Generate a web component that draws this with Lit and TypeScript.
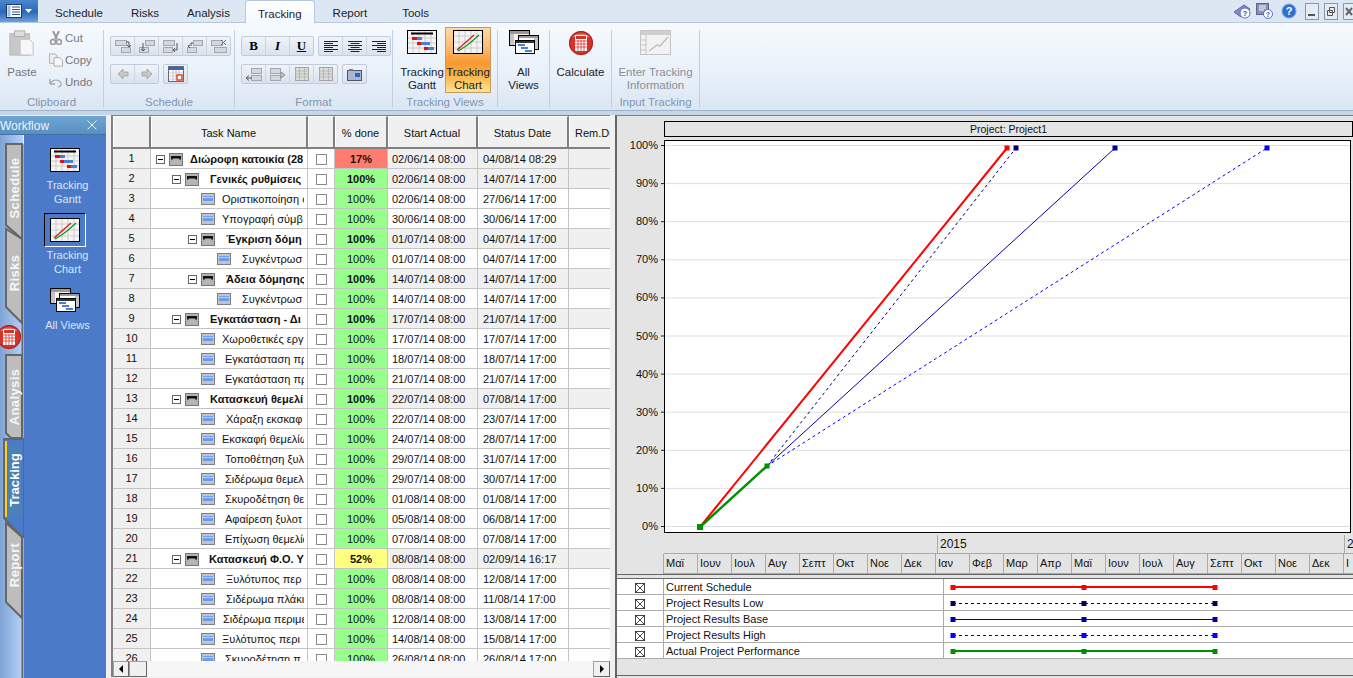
import { LitElement, html, css, svg } from 'lit';
import { customElement } from 'lit/decorators.js';

type Row = [level: number, summary: boolean, name: string, textX: number, pct: number, start: string, status: string];

const ROWS: Row[] = [
  [0, true, 'Διώροφη κατοικία (28', 190, 17, '02/06/14 08:00', '04/08/14 08:29'],
  [1, true, 'Γενικές ρυθμίσεις', 210, 100, '02/06/14 08:00', '14/07/14 17:00'],
  [2, false, 'Οριστικοποίηση σ', 222, 100, '02/06/14 08:00', '27/06/14 17:00'],
  [2, false, 'Υπογραφή σύμβ', 222, 100, '30/06/14 08:00', '30/06/14 17:00'],
  [2, true, 'Έγκριση δόμη', 226, 100, '01/07/14 08:00', '04/07/14 17:00'],
  [3, false, 'Συγκέντρωσ', 242, 100, '01/07/14 08:00', '04/07/14 17:00'],
  [2, true, 'Άδεια δόμησης', 226, 100, '14/07/14 08:00', '14/07/14 17:00'],
  [3, false, 'Συγκέντρωσ', 242, 100, '14/07/14 08:00', '14/07/14 17:00'],
  [1, true, 'Εγκατάσταση - Δι', 210, 100, '17/07/14 08:00', '21/07/14 17:00'],
  [2, false, 'Χωροθετικές εργ', 222, 100, '17/07/14 08:00', '17/07/14 17:00'],
  [2, false, 'Εγκατάσταση πρ', 225, 100, '18/07/14 08:00', '18/07/14 17:00'],
  [2, false, 'Εγκατάσταση πρ', 225, 100, '21/07/14 08:00', '21/07/14 17:00'],
  [1, true, 'Κατασκευή θεμελί', 210, 100, '22/07/14 08:00', '07/08/14 17:00'],
  [2, false, 'Χάραξη εκσκαφ', 226, 100, '22/07/14 08:00', '23/07/14 17:00'],
  [2, false, 'Εκσκαφή θεμελίω', 222, 100, '24/07/14 08:00', '28/07/14 17:00'],
  [2, false, 'Τοποθέτηση ξυλ', 225, 100, '29/07/14 08:00', '31/07/14 17:00'],
  [2, false, 'Σιδέρωμα θεμελί', 225, 100, '29/07/14 08:00', '30/07/14 17:00'],
  [2, false, 'Σκυροδέτηση θε', 225, 100, '01/08/14 08:00', '01/08/14 17:00'],
  [2, false, 'Αφαίρεση ξυλοτ', 225, 100, '05/08/14 08:00', '06/08/14 17:00'],
  [2, false, 'Επίχωση θεμελίω', 225, 100, '07/08/14 08:00', '07/08/14 17:00'],
  [1, true, 'Κατασκευή Φ.Ο. Υ', 209, 52, '08/08/14 08:00', '02/09/14 16:17'],
  [2, false, 'Ξυλότυπος περ', 226, 100, '08/08/14 08:00', '12/08/14 17:00'],
  [2, false, 'Σιδέρωμα πλάκι', 226, 100, '08/08/14 08:00', '11/08/14 17:00'],
  [2, false, 'Σιδέρωμα περιμε', 223, 100, '12/08/14 08:00', '13/08/14 17:00'],
  [2, false, 'Ξυλότυπος περι', 222, 100, '14/08/14 08:00', '15/08/14 17:00'],
  [2, false, 'Σκυροδέτηση π', 225, 100, '26/08/14 08:00', '26/08/14 17:00'],
];

const MONTHS = ['Μαϊ', 'Ιουν', 'Ιουλ', 'Αυγ', 'Σεπτ', 'Οκτ', 'Νοε', 'Δεκ', 'Ιαν', 'Φεβ', 'Μαρ', 'Απρ', 'Μαϊ', 'Ιουν', 'Ιουλ', 'Αυγ', 'Σεπτ', 'Οκτ', 'Νοε', 'Δεκ', 'Ι'];

const LEGEND = [
  { name: 'Current Schedule', color: '#ff0000', width: 2, dash: '' },
  { name: 'Project Results Low', color: '#000066', width: 1, dash: '3 3' },
  { name: 'Project Results Base', color: '#0000aa', width: 1, dash: '' },
  { name: 'Project Results High', color: '#0000ff', width: 1, dash: '3 3' },
  { name: 'Actual Project Performance', color: '#009000', width: 2, dash: '' },
];

const ganttGlyph = () => svg`
  <rect x="0.5" y="0.5" width="29" height="23" fill="#f4f4f4" stroke="#000"/>
  <path d="M6 1v22M12 1v22M18 1v22M24 1v22M1 8h28M1 13h28M1 18h28" stroke="#ccc"/>
  <path d="M4 3.5h22" stroke="#000" stroke-width="2"/>
  <rect x="5" y="7" width="5" height="3" fill="#e01010"/><rect x="10" y="7" width="5" height="3" fill="#4a7fd8"/>
  <rect x="10" y="12" width="4" height="3" fill="#e01010"/><rect x="14" y="12" width="9" height="3" fill="#4a7fd8"/>
  <rect x="17" y="17" width="4" height="3" fill="#e01010"/><rect x="21" y="17" width="6" height="3" fill="#4a7fd8"/>`;

const chartGlyph = () => svg`
  <rect x="0.5" y="0.5" width="29" height="23" fill="#f4f4f4" stroke="#000"/>
  <path d="M6 1v22M12 1v22M18 1v22M24 1v22M1 6h28M1 12h28M1 18h28" stroke="#ccc"/>
  <path d="M4 20L21 5" stroke="#d81010" stroke-width="1.1" fill="none"/>
  <path d="M5 21L13 16L17 13L26 5" stroke="#109010" stroke-width="1.1" fill="none"/>`;

const viewsGlyph = () => svg`
  <rect x="0.5" y="0.5" width="20" height="15" fill="#f2f2f2" stroke="#000"/>
  <rect x="1" y="1" width="19" height="3" fill="#9a9a9a"/><rect x="1" y="4" width="4" height="11" fill="#c4c4c4"/>
  <rect x="9.5" y="5.5" width="20" height="14" fill="#fff" stroke="#000"/>
  <rect x="10" y="6" width="19" height="2" fill="#9a9a9a"/><rect x="25" y="8" width="4" height="11" fill="#c4c4c4"/>
  <rect x="6.5" y="10.5" width="19" height="13" fill="#fff" stroke="#000"/>
  <rect x="7" y="11" width="18" height="2" fill="#333"/>
  <rect x="9" y="14" width="7" height="2" fill="#4a7fd8"/><rect x="12" y="17" width="7" height="2" fill="#4a7fd8"/><rect x="16" y="20" width="7" height="2" fill="#4a7fd8"/>`;

const calcGlyph = (cx: number, cy: number) => svg`
  <circle cx=${cx} cy=${cy} r="12" fill="#d2342a"/>
  <circle cx=${cx} cy=${cy} r="11.5" fill="none" stroke="#a8201c"/>
  <path d="M${cx - 9} ${cy - 6}a11 8 0 0 1 18 0z" fill="#ef8a7c" opacity=".7"/>
  <rect x=${cx - 6} y=${cy - 8} width="12" height="16" fill="#fff" rx="1"/>
  <rect x=${cx - 5} y=${cy - 7} width="10" height="3" fill="#d2342a"/>
  <path d="M${cx - 6} ${cy - 2}h12M${cx - 6} ${cy + 1}h12M${cx - 6} ${cy + 4}h12M${cx - 3} ${cy - 3}v11M${cx} ${cy - 3}v11M${cx + 3} ${cy - 3}v11" stroke="#d2342a" stroke-width=".8"/>`;

// small greyed ribbon button glyphs, 16x14
const bar = (x: number, y: number, w = 11) => svg`<rect x=${x} y=${y} width=${w} height="5" fill="#d4d8dc" stroke="#a4a8ac"/>`;
const SCHEDULE_GLYPHS = [
  svg`${bar(0.5, 1.5)}${bar(6.5, 8.5, 9)}<path d="M11 3h3v4M12 6l2 2 2-2" stroke="#555" fill="none"/>`,
  svg`${bar(6.5, 1.5, 9)}${bar(0.5, 8.5, 9)}<path d="M4 4v8M2 10l2 2 2-2" stroke="#555" fill="none"/>`,
  svg`${bar(0.5, 1.5)}${bar(0.5, 8.5, 9)}<path d="M14 4v7h-3M12 9l-2 2 2 2" stroke="#555" fill="none"/>`,
  svg`${bar(6.5, 1.5, 9)}${bar(0.5, 8.5, 9)}<path d="M4 7V4h2M3 6l-2 1 2 2" stroke="#555" fill="none"/>`,
  svg`${bar(0.5, 1.5)}${bar(3.5, 8.5, 12)}<path d="M10 1l5 5M15 1l-5 5" stroke="#666"/>`,
];
const FORMAT_GLYPHS = [
  svg`${bar(5.5, 1.5, 10)}${bar(5.5, 8.5, 10)}<path d="M0 11h6M3 8.5L0 11l3 2.5" stroke="#555" fill="none"/>`,
  svg`${bar(0.5, 1.5, 10)}${bar(0.5, 8.5, 10)}<path d="M11 5l4 3-4 3z" fill="#d0d0d0" stroke="#888"/>`,
  svg`<rect x="1.5" y=".5" width="13" height="13" fill="#dcdcd8" stroke="#a4a4a4"/><path d="M1 4h14M1 7h14M1 10h14M5.5 1v12M10.5 1v12" stroke="#b8b8b4"/>`,
  svg`<rect x="1.5" y=".5" width="13" height="13" fill="#dcdcd8" stroke="#a4a4a4"/><path d="M1 4h14M1 7h14M1 10h14M5.5 1v12M10.5 1v12" stroke="#b8b8b4"/>`,
];
const ALIGN = [
  'M1 2.5h14M1 4.5h9M1 6.5h14M1 8.5h9M1 10.5h14M1 12.5h9',
  'M1 2.5h14M3.5 4.5h9M1 6.5h14M3.5 8.5h9M1 10.5h14M3.5 12.5h9',
  'M1 2.5h14M6 4.5h9M1 6.5h14M6 8.5h9M1 10.5h14M6 12.5h9',
];

const glyph = (content: unknown) => html`<svg width="16" height="14" viewBox="0 0 16 14">${content}</svg>`;

@customElement('app-root')
export class AppRoot extends LitElement {
  static styles = css`
    :host {
      display: block;
      width: 1353px;
      height: 678px;
      overflow: hidden;
      font: 11px 'Liberation Sans', Arial, sans-serif;
      color: #111;
      background: #f0f0f0;
    }
    svg { display: block; flex: none; }
    svg text { font-family: 'Liberation Sans', Arial, sans-serif; }

    /* ribbon */
    .tabs {
      height: 22px;
      display: flex;
      align-items: flex-end;
      background: #dde7f4;
      border-bottom: 1px solid #b4c8e0;
      font-size: 11.5px;
      position: relative;
    }
    .app-btn {
      width: 38px;
      height: 22px;
      display: flex;
      align-items: center;
      justify-content: center;
      gap: 3px;
      background: linear-gradient(#4c87cc, #2b68b8 55%, #6fa2dc);
      margin-right: 3px;
    }
    .tab { height: 21px; padding: 3px 14px 0; box-sizing: border-box; line-height: 18px; color: #1c1c28; }
    .tab.on {
      height: 23px;
      margin: 0 4px -1px 1px;
      padding: 4px 12px 0;
      background: linear-gradient(#fff, #f4f9fe);
      border: 1px solid #b4c8e0;
      border-bottom: 0;
      border-radius: 3px 3px 0 0;
    }
    .tab.last { margin-left: 7px; }
    .win { margin-left: auto; display: flex; align-items: center; height: 22px; }
    .win svg { margin-right: 5px; }
    .win .help { margin: 0 8px 0 2px; }
    .win .close { margin: 0; }
    .ribbon {
      height: 87px;
      display: flex;
      background: linear-gradient(#f6fafe, #e8f0f9 60%, #dbe6f3);
      font-size: 11.5px;
      border-bottom: 1px solid #9fb3cc;
      box-sizing: content-box;
    }
    .band { height: 4px; background: #c6d6e9; }
    .grp {
      box-sizing: border-box;
      height: 77px;
      margin-top: 7px;
      border-right: 1px solid #c0d0e2;
      display: flex;
      flex-direction: column;
      flex: none;
      position: relative;
    }
    .grp-body { flex: 1; display: flex; min-height: 0; }
    .grp-label { text-align: center; color: #8096b0; line-height: 14px; height: 16px; margin-bottom: -4px; font-size: 11.5px; flex: none; }
    .paste { width: 44px; display: flex; flex-direction: column; align-items: center; color: #777; }
    .paste-cap { margin-top: 9px; line-height: 14px; }
    .clip-list { display: flex; flex-direction: column; color: #777; gap: 4px; margin-top: -1px; padding-left: 5px; }
    .clip-item { height: 18px; display: flex; align-items: center; gap: 2px; }
    .small { flex-direction: column; gap: 8px; padding: 6px 0 0 6px; }
    .small-row { display: flex; gap: 4px; }
    .btn-set { display: flex; height: 20px; width: max-content; box-sizing: border-box; border: 1px solid #c0ccda; border-radius: 2px; background: linear-gradient(#f0f4f9, #d9e2ee); }
    .btn-set > div { width: 23px; display: flex; align-items: center; justify-content: center; border-left: 1px solid #ccd6e2; }
    .btn-set > div:first-child { border-left: 0; }
    .fmt { font: bold 13px 'Liberation Serif', serif; color: #000; }
    .fmt.i { font-style: italic; }
    .fmt.u { text-decoration: underline; }
    .large {
      width: 46px;
      height: 66px;
      margin-top: -3px;
      box-sizing: border-box;
      padding-top: 3px;
      display: flex;
      flex-direction: column;
      align-items: center;
      text-align: center;
      line-height: 13px;
      flex: none;
      color: #1c1c28;
    }
    .large .cap { margin-top: 12px; white-space: nowrap; }
    .large.active {
      background: linear-gradient(#ffd9a8, #fbb569 35%, #f8982f 55%, #fbb54a 75%, #ffe48f);
      border: 1px solid #c29b62;
      padding-top: 2px;
    }
    .large.calc { width: 60px; }
    .large.calc svg { margin-bottom: -2px; }
    .large.enter { width: 86px; color: #8a8f96; }
    .large.enter .cap { margin-top: 11px; }
    .views-body { padding-left: 6px; }
    .center-body { justify-content: center; }
    .g-clip { width: 104px; }
    .g-sched { width: 131px; }
    .g-format { width: 158px; }
    .g-views { width: 105px; }
    .g-all { width: 52px; }
    .g-calc { width: 62px; }
    .g-input { width: 88px; }

    /* body */
    .main { display: flex; height: 563px; }
    .side { width: 106px; flex: none; display: flex; flex-direction: column; padding-top: 1px; box-sizing: border-box; }
    .side-head {
      height: 18px;
      box-sizing: content-box;
      flex: none;
      display: flex;
      align-items: center;
      justify-content: space-between;
      padding-right: 9px;
      color: #eef4fb;
      font-size: 12px;
      background: linear-gradient(#6ea5d2, #5790c2);
      border-bottom: 1px solid #44709f;
    }
    .side-head span { padding-top: 2px; }
    .side-body { flex: 1; display: flex; min-height: 0; }
    .panel {
      flex: 1;
      background: #4a7ac8;
      color: #dbe6fa;
      display: flex;
      flex-direction: column;
      align-items: center;
      padding-top: 13px;
      font-size: 11px;
      line-height: 14px;
      text-align: center;
    }
    .item { width: 62px; height: 70px; display: flex; flex-direction: column; align-items: center; }
    .item .cap { margin-top: 6px; padding-left: 5px; }
    .sel { margin-top: -5px; padding: 4px 5px; border: 1px solid; border-color: #000 #fff #fff #000; }
    .item .sel + .cap { margin-top: 1px; }
    .gap { width: 5px; flex: none; }

    .table { width: 499px; flex: none; display: flex; flex-direction: column; border-left: 2px solid #808080; border-top: 1px solid #808080; box-sizing: border-box; height: 562px; background: #fff; }
    .cols { display: grid; grid-template-columns: 38px 157px 27px 53px 90px 91px 41px; }
    .thead { height: 33px; flex: none; }
    .th {
      background: #f0f0f0;
      display: flex;
      align-items: center;
      justify-content: center;
      padding-top: 2px;
      border-right: 2px solid #808080;
      border-bottom: 2px solid #808080;
      border-top: 1px solid #fff;
      box-shadow: inset 1px 0 #fff;
      box-sizing: border-box;
      white-space: nowrap;
      overflow: hidden;
    }
    .th.rem { justify-content: flex-start; padding-left: 6px; border-right: 0; }
    .tbody { height: 512px; overflow: hidden; flex: none; }
    .row { height: 20px; }
    .td {
      box-sizing: border-box;
      height: 20px;
      padding-top: 1px;
      border-right: 1px solid #c4c4c4;
      border-bottom: 1px solid #c4c4c4;
      display: flex;
      align-items: center;
      white-space: nowrap;
      overflow: hidden;
      line-height: 18px;
    }
    .td.num { background: #f0f0f0; justify-content: center; padding: 0 0 2px; }
    .name { padding-right: 3px; }
    .row.sum .name-text { font-weight: bold; }
    .name-text { overflow: hidden; flex: 1; white-space: nowrap; }
    .exp { width: 9px; height: 9px; flex: none; margin-right: 4px; box-sizing: border-box; border: 1px solid #666; background: linear-gradient(90deg, transparent 1px, #000 1px, #000 6px, transparent 6px) center/100% 1px no-repeat #fff; }
    .exp.none { visibility: hidden; }
    .chk { justify-content: center; }
    .box { width: 11px; height: 11px; box-sizing: border-box; border: 1px solid #8a8a8a; background: #fff; }
    .pct { justify-content: center; background: #99ff8c; }
    .pct.low { background: #ff7d70; }
    .pct.mid { background: #ffff80; }
    .row.sum .pct { font-weight: bold; }
    .date { padding-left: 4px; }
    .date.st { padding-left: 5px; }
    .row.sum .date, .row.sum .rem { background: #f0f0f0; }
    .td.rem { border-right: 0; }
    .scroll {
      height: 16px;
      flex: none;
      display: flex;
      background: repeating-conic-gradient(#f1f1f1 0 25%, #fbfbfb 0 50%) 0 0 / 2px 2px;
    }
    .sb { box-sizing: border-box; background: #f0f0f0; border: 1px solid #a0a0a0; border-right-color: #666; border-bottom-color: #666; display: flex; align-items: center; justify-content: center; }
    .sb.l { width: 16px; }
    .sb.t { width: 18px; }
    .sb.r { width: 17px; margin-left: auto; }

    .split { width: 5px; flex: none; }
    .chart { flex: 1; min-width: 0; border-left: 2px solid #666; border-top: 1px solid #808080; background: #e4e4e4; display: flex; flex-direction: column; height: 563px; box-sizing: border-box; overflow: hidden; }
    .title-wrap { height: 22px; padding: 5px 0 0 47px; box-sizing: border-box; flex: none; }
    .title { height: 16px; box-sizing: border-box; border: 1px solid #000; background: #e4e4e4; text-align: center; line-height: 14px; font-size: 10.5px; }
    .time { padding-left: 47px; flex: none; height: 40px; border-bottom: 1px solid #666; box-sizing: content-box; overflow: hidden; }
    .yr, .mo { display: flex; height: 20px; box-sizing: border-box; }
    .yr { padding-top: 1px; }
    .yc { box-sizing: border-box; border-right: 1px solid #aaa; border-bottom: 1px solid #aaa; flex: none; padding-left: 2px; line-height: 18px; font-size: 12px; overflow: hidden; }
    .yc.y0 { width: 274px; }
    .yc.y1 { width: 407px; }
    .yc.y2 { width: 20px; }
    .mc { width: 34px; flex: none; box-sizing: border-box; border-right: 1px solid #aaa; border-bottom: 1px solid #aaa; padding-left: 2px; line-height: 19px; white-space: nowrap; overflow: hidden; }
    .mo { border-left: 1px solid #aaa; margin-left: -1px; width: max-content; }
    .leg { margin-top: 3px; background: #fff; border-top: 1px solid #666; flex: none; }
    .leg-row { display: grid; grid-template-columns: 47px 280px 1fr; height: 16px; border-bottom: 1px solid #aaa; box-sizing: border-box; line-height: 16px; }
    .leg-x { display: flex; align-items: center; justify-content: center; padding-top: 2px; box-sizing: border-box; border-right: 1px solid #aaa; }
    .leg-n { padding-left: 2px; border-right: 1px solid #aaa; white-space: nowrap; }
    .foot { height: 16px; flex: none; border-bottom: 1px solid #666; }
  `;

  private renderRibbon() {
    return html`
      <div class="tabs">
        <div class="app-btn">
          <svg width="16" height="14" viewBox="0 0 16 14"><rect x=".5" y=".5" width="15" height="13" fill="#fff" stroke="#1c3c70"/><path d="M6 3h8M6 5.5h8M6 8h8M6 10.5h8" stroke="#2b4f8a"/><rect x="1.5" y="1.5" width="3" height="11" fill="#9fbde4"/></svg>
          <svg width="7" height="4" viewBox="0 0 7 4"><path d="M0 0h7L3.5 4z" fill="#fff"/></svg>
        </div>
        <div class="tab">Schedule</div>
        <div class="tab">Risks</div>
        <div class="tab">Analysis</div>
        <div class="tab on">Tracking</div>
        <div class="tab">Report</div>
        <div class="tab last">Tools</div>
        <div class="win">
          <svg width="18" height="16" viewBox="0 0 18 16"><path d="M1 9L11 2l6 4-9 8z" fill="#8c84cc" stroke="#6a62aa"/><circle cx="12" cy="10" r="5" fill="#fff" stroke="#5a6fc0"/><text x="12" y="13" font-size="8" font-weight="bold" text-anchor="middle" fill="#3050a8">?</text></svg>
          <svg width="18" height="16" viewBox="0 0 18 16"><rect x=".5" y=".5" width="12" height="11" fill="#8a8fb8" stroke="#5e638c"/><path d="M3 3h7M3 5h7M3 7h5" stroke="#fff"/><circle cx="12" cy="11" r="4.5" fill="#fff" stroke="#5a6fc0"/><text x="12" y="14" font-size="7" font-weight="bold" text-anchor="middle" fill="#3050a8">?</text></svg>
          <svg class="help" width="16" height="16" viewBox="0 0 16 16"><circle cx="8" cy="8" r="7" fill="#2f6fd0" stroke="#7ba4e0"/><text x="8" y="12" font-size="11" font-weight="bold" text-anchor="middle" fill="#fff">?</text></svg>
          <svg width="14" height="17" viewBox="0 0 14 17"><rect x=".5" y=".5" width="13" height="16" fill="#e4ebf4" stroke="#8a96a6"/><path d="M3 12h7" stroke="#555" stroke-width="2"/></svg>
          <svg width="14" height="17" viewBox="0 0 14 17"><rect x=".5" y=".5" width="13" height="16" fill="#e4ebf4" stroke="#8a96a6"/><path d="M5.5 4.5h5v5h-5zM3.5 7.5h5v5h-5z" fill="#e4ebf4" stroke="#555"/></svg>
          <svg class="close" width="10" height="17" viewBox="0 0 10 17"><path d="M10 .5H.5v16H10" fill="#e4ebf4" stroke="#8a96a6"/><path d="M3 5l6 7M9 5l-6 7" stroke="#666" stroke-width="2"/></svg>
        </div>
      </div>
      <div class="ribbon">
        <div class="grp g-clip">
          <div class="grp-body">
            <div class="paste">
              <svg width="26" height="26" viewBox="0 0 28 28"><rect x="1" y="4" width="21" height="23" fill="#c8c8c8" stroke="#b4b4b4"/><rect x="6" y="1" width="11" height="6" fill="#dedede" stroke="#aaa"/><path d="M12 10h10l4 4v13H12z" fill="#f6f6f6" stroke="#c0c0c0"/></svg>
              <div class="paste-cap">Paste</div>
            </div>
            <div class="clip-list">
              <div class="clip-item"><svg width="14" height="14" viewBox="0 0 14 14"><path d="M4 0l4 8M10 0L6 8" stroke="#999" stroke-width="2"/><circle cx="4" cy="11" r="2.5" fill="none" stroke="#999" stroke-width="1.5"/><circle cx="10" cy="11" r="2.5" fill="none" stroke="#999" stroke-width="1.5"/></svg><span>Cut</span></div>
              <div class="clip-item"><svg width="14" height="14" viewBox="0 0 15 14"><path d="M.5.5h6l2 2v8h-8z" fill="#eee" stroke="#aaa"/><path d="M5.5 4.5h6l3 3v6h-9z" fill="#f8f8f8" stroke="#aaa"/></svg><span>Copy</span></div>
              <div class="clip-item"><svg width="14" height="14" viewBox="0 0 14 14"><path d="M1 4v5h5" fill="none" stroke="#888"/><path d="M2 8c2-4 8-4 10 0 1 2-1 4-3 4" fill="none" stroke="#aaa" stroke-width="1.2"/></svg><span>Undo</span></div>
            </div>
          </div>
          <div class="grp-label">Clipboard</div>
        </div>
        <div class="grp g-sched">
          <div class="grp-body small">
            <div class="btn-set">${SCHEDULE_GLYPHS.map((g) => html`<div>${glyph(g)}</div>`)}</div>
            <div class="small-row">
              <div class="btn-set">
                <div><svg width="12" height="12" viewBox="0 0 12 12"><path d="M1 6l5-5v3h5v4H6v3z" fill="#c8c8c8" stroke="#aaa"/></svg></div>
                <div><svg width="12" height="12" viewBox="0 0 12 12"><path d="M11 6L6 1v3H1v4h5v3z" fill="#c8c8c8" stroke="#aaa"/></svg></div>
              </div>
              <div class="btn-set"><div>
                <svg width="16" height="16" viewBox="0 0 16 16"><rect x=".5" y=".5" width="15" height="15" fill="#fff" stroke="#667"/><rect x="1" y="1" width="14" height="3" fill="#3a66b8"/><path d="M1 7h14M1 10h14M1 13h14M5 4v11M8 4v11M11 4v11" stroke="#c4c8d0"/><rect x="9" y="9" width="5" height="5" fill="#fff" stroke="#e04a20" stroke-width="1.5"/></svg>
              </div></div>
            </div>
          </div>
          <div class="grp-label">Schedule</div>
        </div>
        <div class="grp g-format">
          <div class="grp-body small">
            <div class="small-row">
              <div class="btn-set">
                <div class="fmt">B</div><div class="fmt i">I</div><div class="fmt u">U</div>
              </div>
              <div class="btn-set">${ALIGN.map((d) => html`<div><svg width="16" height="14" viewBox="0 0 16 14"><path d=${d} stroke="#222" fill="none"/></svg></div>`)}</div>
            </div>
            <div class="small-row">
              <div class="btn-set">${FORMAT_GLYPHS.map((g) => html`<div>${glyph(g)}</div>`)}</div>
              <div class="btn-set"><div>
                <svg width="15" height="13" viewBox="0 0 15 13"><rect x=".5" y="2.5" width="14" height="10" fill="#a8b8d0" stroke="#556"/><rect x="8" y="5" width="5" height="4" fill="#2a62d0"/><rect x="2" y="1" width="4" height="2" fill="#778"/></svg>
              </div></div>
            </div>
          </div>
          <div class="grp-label">Format</div>
        </div>
        <div class="grp g-views">
          <div class="grp-body views-body">
            <div class="large"><svg width="30" height="24" viewBox="0 0 30 24">${ganttGlyph()}</svg><div class="cap">Tracking<br />Gantt</div></div>
            <div class="large active"><svg width="30" height="24" viewBox="0 0 30 24">${chartGlyph()}</svg><div class="cap">Tracking<br />Chart</div></div>
          </div>
          <div class="grp-label">Tracking Views</div>
        </div>
        <div class="grp g-all">
          <div class="grp-body center-body">
            <div class="large"><svg width="30" height="24" viewBox="0 0 30 24">${viewsGlyph()}</svg><div class="cap">All<br />Views</div></div>
          </div>
          <div class="grp-label"></div>
        </div>
        <div class="grp g-calc">
          <div class="grp-body center-body">
            <div class="large calc"><svg width="26" height="26" viewBox="0 0 26 26">${calcGlyph(13, 13)}</svg><div class="cap">Calculate</div></div>
          </div>
          <div class="grp-label"></div>
        </div>
        <div class="grp g-input">
          <div class="grp-body center-body">
            <div class="large enter">
              <svg width="31" height="25" viewBox="0 0 31 25"><rect x=".5" y=".5" width="30" height="24" fill="#f2f2f2" stroke="#c4c4c4"/><rect x="1" y="1" width="29" height="4" fill="#cfcfcf"/><path d="M6 5v19M1 10h5M1 15h5M1 20h5" stroke="#c4c4c4"/><path d="M9 21l8-6 3 1 8-9" stroke="#c0c0c0" stroke-width="1.5" fill="none"/></svg>
              <div class="cap">Enter Tracking<br />Information</div>
            </div>
          </div>
          <div class="grp-label">Input Tracking</div>
        </div>
      </div>
      <div class="band"></div>
    `;
  }

  private renderStrip() {
    const tabFill = '#bdbdbd';
    const line = '#666';
    const label = (text: string, y: number) => svg`<text transform="rotate(-90 19 ${y})" x="19" y=${y} text-anchor="middle" font-size="13" font-weight="bold" letter-spacing=".4" fill="#f6f6f6">${text}</text>`;
    return html`
      <svg width="24" height="543" viewBox="0 135 24 543">
        <defs>
          <linearGradient id="stripe"><stop offset="0" stop-color="#7ea3d3" /><stop offset="1" stop-color="#b6d2f8" /></linearGradient>
        </defs>
        <rect x="0" y="135" width="23" height="543" fill="url(#stripe)" />
        <path d="M22.5 144V438M22.5 537V678" stroke=${line} stroke-width="2" />
        <path d="M22 144H6V225L22 239z" fill=${tabFill} stroke=${line} stroke-width="2" />
        <path d="M22 239L6 229V307L22 323z" fill=${tabFill} stroke=${line} stroke-width="2" />
        <path d="M22 355H6V433L11 438H22z" fill=${tabFill} stroke=${line} stroke-width="2" />
        <path d="M22 537L6 523V602L22 618z" fill=${tabFill} stroke=${line} stroke-width="2" />
        <path d="M24 439H4V518L22 537H24z" fill="#4a7ac8" stroke=${line} stroke-width="2" />
        <rect x="5" y="441" width="2" height="76" fill="#ffcf1a" />
        <rect x="8" y="446" width="13" height="70" fill="#4e80b8" />
        ${label('Schedule', 188)}${label('Risks', 273)}${label('Analysis', 397)}${label('Report', 565)}
        <text transform="rotate(-90 19 480)" x="19" y="480" text-anchor="middle" font-size="13" font-weight="bold" fill="#fff">Tracking</text>
        ${calcGlyph(9, 337)}
      </svg>
    `;
  }

  private renderSide() {
    return html`
      <div class="side">
        <div class="side-head">
          <span>Workflow</span>
          <svg width="10" height="10" viewBox="0 0 10 10"><path d="M.5.5l9 9M9.5.5l-9 9" stroke="#eaf2fb" /></svg>
        </div>
        <div class="side-body">
          ${this.renderStrip()}
          <div class="panel">
            <div class="item"><svg width="30" height="24" viewBox="0 0 30 24">${ganttGlyph()}</svg><div class="cap">Tracking<br />Gantt</div></div>
            <div class="item">
              <div class="sel"><svg width="30" height="24" viewBox="0 0 30 24">${chartGlyph()}</svg></div>
              <div class="cap">Tracking<br />Chart</div>
            </div>
            <div class="item"><svg width="30" height="24" viewBox="0 0 30 24">${viewsGlyph()}</svg><div class="cap">All Views</div></div>
          </div>
        </div>
      </div>
    `;
  }

  private renderRow(r: Row, i: number) {
    const [level, summary, name, textX, pct, start, status] = r;
    const iconEnd = 150 + 19 + level * 16 + 14;
    const pctClass = pct < 50 ? 'low' : pct < 100 ? 'mid' : '';
    return html`
      <div class="row cols ${summary ? 'sum' : ''}">
        <div class="td num">${i + 1}</div>
        <div class="td name" style="padding-left:${5 + level * 16}px">
          <div class="exp ${summary ? '' : 'none'}"></div>
          ${summary
            ? html`<svg width="14" height="13" viewBox="0 0 14 13"><rect x=".5" y=".5" width="13" height="12" fill="#b4b4b4" stroke="#777" /><path d="M2 3h10v3l-1 1-1-1.5H4L3 7 2 6z" fill="#111" /></svg>`
            : html`<svg width="14" height="12" viewBox="0 0 14 12"><rect x=".5" y=".5" width="13" height="11" fill="#c4c4c4" stroke="#808080" /><rect x="2" y="3" width="10" height="5" fill="#6c9cf0" /><rect x="2" y="4" width="10" height="1" fill="#bcd4fa" /></svg>`}
          <div class="name-text" style="margin-left:${textX - iconEnd}px">${name}</div>
        </div>
        <div class="td chk"><div class="box"></div></div>
        <div class="td pct ${pctClass}">${pct}%</div>
        <div class="td date">${start}</div>
        <div class="td date st">${status}</div>
        <div class="td rem"></div>
      </div>
    `;
  }

  private renderTable() {
    return html`
      <div class="table">
        <div class="cols thead">
          <div class="th"></div>
          <div class="th">Task Name</div>
          <div class="th"></div>
          <div class="th">% done</div>
          <div class="th">Start Actual</div>
          <div class="th">Status Date</div>
          <div class="th rem">Rem.Du</div>
        </div>
        <div class="tbody">${ROWS.map((r, i) => this.renderRow(r, i))}</div>
        <div class="scroll">
          <div class="sb l"><svg width="5" height="8" viewBox="0 0 5 8"><path d="M4 0v8L0 4z" fill="#000" /></svg></div>
          <div class="sb t"></div>
          <div class="sb r"><svg width="5" height="8" viewBox="0 0 5 8"><path d="M1 0v8l4-4z" fill="#000" /></svg></div>
        </div>
      </div>
    `;
  }

  private renderPlot() {
    const pts = Array.from({ length: 11 }, (_, i) => ({ y: 526 - i * 38.1, label: `${i * 10}%` }));
    const mark = (x: number, y: number, c: string, s = 5) => svg`<rect x=${x - s / 2} y=${y - s / 2} width=${s} height=${s} fill=${c} />`;
    return html`
      <svg width="736" height="396" viewBox="617 138 736 396">
        <rect x="664.5" y="140.5" width="686" height="392" fill="#fff" stroke="#000" />
        ${pts.map(
          (p) => svg`
            <path d="M665 ${p.y + 0.5}H1350" stroke="#dedede" />
            <path d="M661 ${p.y + 0.5}H664" stroke="#222" />
            <text x="658" y=${p.y + 4} font-size="11" text-anchor="end" fill="#111">${p.label}</text>`,
        )}
        <path d="M767 466L1016 148" stroke="#000066" stroke-dasharray="3 3" fill="none" />
        <path d="M767 466L1115 148" stroke="#0000aa" fill="none" />
        <path d="M767 466L1267 148" stroke="#0000ff" stroke-dasharray="3 3" fill="none" />
        <path d="M700 527L1007 148" stroke="#ff0000" stroke-width="2" fill="none" />
        <path d="M700 527L767 466" stroke="#009000" stroke-width="2.4" fill="none" />
        ${mark(1007, 148, '#ff0000')}${mark(1016, 148, '#000066')}${mark(1115, 148, '#0000aa')}${mark(1267, 148, '#0000ff')}
        ${mark(767, 466, '#009000')}${mark(700, 527, '#009000', 6)}
      </svg>
    `;
  }

  private renderChart() {
    return html`
      <div class="chart">
        <div class="title-wrap"><div class="title">Project: Project1</div></div>
        ${this.renderPlot()}
        <div class="time">
          <div class="yr">
            <div class="yc y0"></div>
            <div class="yc y1">2015</div>
            <div class="yc y2">2</div>
          </div>
          <div class="mo">${MONTHS.map((m) => html`<div class="mc">${m}</div>`)}</div>
        </div>
        <div class="leg">
          ${LEGEND.map(
            (l) => html`
              <div class="leg-row">
                <div class="leg-x"><svg width="10" height="10" viewBox="0 0 11 11"><rect x=".5" y=".5" width="10" height="10" fill="#fff" stroke="#333" /><path d="M1 1l9 9M10 1l-9 9" stroke="#333" /></svg></div>
                <div class="leg-n">${l.name}</div>
                <svg width="409" height="15" viewBox="0 0 409 15">
                  <path d="M9 ${l.width === 2 ? 8 : 8.5}H271" stroke=${l.color} stroke-width=${l.width} stroke-dasharray=${l.dash || 'none'} />
                  ${[9, 140, 271].map((x) => svg`<rect x=${x - 2.5} y="6" width="5" height="5" fill=${l.color} />`)}
                </svg>
              </div>
            `,
          )}
        </div>
        <div class="foot"></div>
      </div>
    `;
  }

  render() {
    return html`
      ${this.renderRibbon()}
      <div class="main">
        ${this.renderSide()}
        <div class="gap"></div>
        ${this.renderTable()}
        <div class="split"></div>
        ${this.renderChart()}
      </div>
    `;
  }
}
